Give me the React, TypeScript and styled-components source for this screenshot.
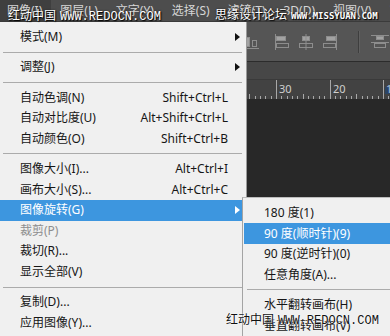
import React from "react";
import styled, { createGlobalStyle } from "styled-components";

const Global = createGlobalStyle`
  html, body { margin: 0; padding: 0; background: #282828; }
  * { box-sizing: border-box; }
`;

const UI_FONT = `"Noto Sans", "Noto Sans CJK SC", sans-serif`;

const Screen = styled.div`
  position: relative;
  width: 390px;
  height: 336px;
  overflow: hidden;
  display: flex;
  flex-direction: column;
  background: #282828;
  font-family: ${UI_FONT};
`;

const MenuBar = styled.div`
  height: 22px;
  flex: none;
  display: flex;
  align-items: stretch;
  background: #4d4d4d;
  border-bottom: 1px solid #3b3b3b;
`;

const MenuTitle = styled.div<{ $active?: boolean; $first?: boolean }>`
  display: flex;
  align-items: center;
  padding: 0 9px 0 ${(p) => (p.$first ? "7px" : "9px")};
  font-size: 12px;
  line-height: 1;
  white-space: nowrap;
  color: #d6d6d6;
  background: ${(p) => (p.$active ? "#3f3f3f" : "transparent")};
`;

const Toolbar = styled.div`
  height: 40px;
  flex: none;
  display: flex;
  align-items: center;
  padding-left: 243px;
  background: #555555;
  border-bottom: 1px solid #2c2c2c;
`;

const IconGroup = styled.div<{ $ml: number }>`
  display: flex;
  align-items: center;
  gap: 8px;
  margin-left: ${(p) => p.$ml}px;
  flex: none;
`;

const ToolSep = styled.div`
  width: 1px;
  height: 22px;
  margin-left: 20px;
  background: #3e3e3e;
  box-shadow: 1px 0 0 #606060;
  flex: none;
`;

const TabStrip = styled.div`
  height: 17px;
  flex: none;
  background: #474747;
`;

const RulerBar = styled.div`
  height: 20px;
  flex: none;
  background: #424242;
  border-top: 1px solid #3a3a3a;
`;

const Canvas = styled.div`
  flex: 1;
  background: #282828;
`;

const Menu = styled.div`
  position: absolute;
  left: 0;
  top: 22px;
  width: 247px;
  bottom: 0;
  padding-top: 5px;
  background: #f0f0f0;
  border-right: 1px solid #9a9a9a;
  display: flex;
  flex-direction: column;
`;

const SubMenu = styled.div`
  position: absolute;
  left: 242px;
  top: 197px;
  right: -10px;
  bottom: -10px;
  padding: 4.7px 0 0 1px;
  background: #f0f0f0;
  border-left: 1px solid #a4a4a4;
  border-top: 1px solid #bdbdbd;
  display: flex;
  flex-direction: column;
`;

const Item = styled.div<{ $active?: boolean; $disabled?: boolean; $indent: number }>`
  height: 20.6px;
  flex: none;
  display: flex;
  align-items: center;
  padding-left: ${(p) => p.$indent}px;
  padding-right: 18px;
  margin-right: ${(p) => (p.$indent > 19 ? "0" : "4px")};
  font-size: 12px;
  line-height: 1;
  white-space: nowrap;
  position: relative;
  color: ${(p) => (p.$active ? "#ffffff" : p.$disabled ? "#8e8e8e" : "#161616")};
  background: ${(p) => (p.$active ? "#3d96df" : "transparent")};
`;

const Label = styled.span`
  flex: 1;
`;

const Shortcut = styled.span`
  margin-right: 0;
`;

const Arrow = styled.svg`
  position: absolute;
  right: 6px;
  top: 50%;
  margin-top: -4px;
`;

const Separator = styled.div`
  height: 9.6px;
  flex: none;
  display: flex;
  align-items: center;
  padding: 0 4px 0 3px;
  &::after {
    content: "";
    flex: 1;
    height: 1px;
    background: #ababab;
  }
`;

const Watermark = styled.div<{ $x: number; $y: number; $dark?: boolean }>`
  position: absolute;
  left: ${(p) => p.$x}px;
  top: ${(p) => p.$y}px;
  display: flex;
  align-items: baseline;
  gap: 4px;
  white-space: nowrap;
  color: ${(p) => (p.$dark ? "#111" : "#ffffff")};
  text-shadow: ${(p) =>
    p.$dark
      ? "0 0 2px #fff, 0 0 1px #fff"
      : "1px 1px 1px #000, 0 0 2px #222"};
  pointer-events: none;
`;

const WmCjk = styled.span`
  font-family: "Noto Sans CJK SC", sans-serif;
  font-size: 12px;
  line-height: 14px;
`;

const WmLatin = styled.span<{ $small?: boolean }>`
  font-family: ${(p) => (p.$small ? `"DejaVu Sans Mono", monospace` : `"Liberation Mono", monospace`)};
  font-size: ${(p) => (p.$small ? "9px" : "12px")};
  font-weight: ${(p) => (p.$small ? 700 : 400)};
  line-height: 14px;
`;

type Entry =
  | { sep: true }
  | { label: string; shortcut?: string; arrow?: boolean; active?: boolean; disabled?: boolean };

const mainItems: Entry[] = [
  { label: "模式(M)", arrow: true },
  { sep: true },
  { label: "调整(J)", arrow: true },
  { sep: true },
  { label: "自动色调(N)", shortcut: "Shift+Ctrl+L" },
  { label: "自动对比度(U)", shortcut: "Alt+Shift+Ctrl+L" },
  { label: "自动颜色(O)", shortcut: "Shift+Ctrl+B" },
  { sep: true },
  { label: "图像大小(I)...", shortcut: "Alt+Ctrl+I" },
  { label: "画布大小(S)...", shortcut: "Alt+Ctrl+C" },
  { label: "图像旋转(G)", arrow: true, active: true },
  { label: "裁剪(P)", disabled: true },
  { label: "裁切(R)..." },
  { label: "显示全部(V)" },
  { sep: true },
  { label: "复制(D)..." },
  { label: "应用图像(Y)..." },
];

const subItems: Entry[] = [
  { label: "180 度(1)" },
  { label: "90 度(顺时针)(9)", active: true },
  { label: "90 度(逆时针)(0)" },
  { label: "任意角度(A)..." },
  { sep: true },
  { label: "水平翻转画布(H)" },
  { label: "垂直翻转画布(V)" },
];

const renderEntries = (entries: Entry[], indent: number) =>
  entries.map((e, i) =>
    "sep" in e ? (
      <Separator key={i} />
    ) : (
      <Item key={i} $active={e.active} $disabled={e.disabled} $indent={indent}>
        <Label>{e.label}</Label>
        {e.shortcut && <Shortcut>{e.shortcut}</Shortcut>}
        {e.arrow && (
          <Arrow width="5" height="8" viewBox="0 0 5 8">
            <polygon points="0,0 5,4 0,8" fill={e.active ? "#ffffff" : "#111111"} />
          </Arrow>
        )}
      </Item>
    )
  );

const S = "#8d8d8d";
const F = "#a2a2a2";

const AlignBottom = () => (
  <svg width="16" height="16" viewBox="0 0 16 16">
    <rect x="2.5" y="3.5" width="4" height="9" fill={F} stroke={S} />
    <rect x="9.5" y="6.5" width="4" height="6" fill="none" stroke={S} />
    <line x1="0" y1="14.5" x2="16" y2="14.5" stroke={S} />
  </svg>
);
const AlignLeft = () => (
  <svg width="16" height="16" viewBox="0 0 16 16">
    <line x1="1.5" y1="0" x2="1.5" y2="16" stroke={S} />
    <rect x="2.5" y="2.5" width="9" height="4" fill={F} stroke={S} />
    <rect x="2.5" y="9.5" width="12" height="4" fill="none" stroke={S} />
  </svg>
);
const AlignHCenter = () => (
  <svg width="16" height="16" viewBox="0 0 16 16">
    <rect x="4.5" y="2.5" width="7" height="4" fill={F} stroke={S} />
    <rect x="1.5" y="9.5" width="13" height="4" fill="none" stroke={S} />
    <line x1="8" y1="0" x2="8" y2="16" stroke={S} />
  </svg>
);
const AlignRight = () => (
  <svg width="16" height="16" viewBox="0 0 16 16">
    <line x1="14.5" y1="0" x2="14.5" y2="16" stroke={S} />
    <rect x="4.5" y="2.5" width="9" height="4" fill={F} stroke={S} />
    <rect x="1.5" y="9.5" width="12" height="4" fill="none" stroke={S} />
  </svg>
);
const DistTop = () => (
  <svg width="18" height="16" viewBox="0 0 18 16">
    <line x1="0" y1="1.5" x2="18" y2="1.5" stroke={S} />
    <rect x="5.5" y="2.5" width="7" height="3" fill={F} stroke={S} />
    <line x1="0" y1="8.5" x2="18" y2="8.5" stroke={S} />
    <rect x="3.5" y="9.5" width="11" height="4" fill="none" stroke={S} />
  </svg>
);

const Ruler = () => {
  const unit = 5.35;
  const origin = 383;
  const ticks: React.ReactNode[] = [];
  for (let k = -50; k <= 2; k++) {
    const x = Math.round(origin + k * unit) + 0.5;
    const major = k % 10 === 0;
    const mid = !major && k % 5 === 0;
    const h = major ? 19 : mid ? 5 : 3;
    ticks.push(<line key={k} x1={x} y1={19 - h} x2={x} y2={19} stroke="#a8a8a8" strokeWidth="1" />);
  }
  const labels = [
    { t: "30", x: 279 },
    { t: "20", x: 333 },
  ];
  return (
    <svg width="390" height="19" viewBox="0 0 390 19" style={{ display: "block" }}>
      {ticks}
      {labels.map((l) => (
        <text key={l.t} x={l.x} y={13} fontSize="11" fill="#cfcfcf" fontFamily="Noto Sans, sans-serif">
          {l.t}
        </text>
      ))}
      <rect x="385" y="7" width="5" height="7" fill="#2d4563" />
      <text x={386} y={13} fontSize="11" fill="#9dc0e8" fontFamily="Noto Sans, sans-serif">1</text>
    </svg>
  );
};

const titles = ["图像(I)", "图层(L)", "文字(Y)", "选择(S)", "滤镜(T)", "3D(D)", "视图(V)", "窗口(W)"];

export default function App() {
  return (
    <>
      <Global />
      <Screen>
        <MenuBar>
          {titles.map((t, i) => (
            <MenuTitle key={t} $active={i === 0} $first={i === 0}>
              {t}
            </MenuTitle>
          ))}
        </MenuBar>
        <Toolbar>
          <IconGroup $ml={0}>
            <AlignBottom />
          </IconGroup>
          <IconGroup $ml={15}>
            <AlignLeft />
            <AlignHCenter />
            <AlignRight />
          </IconGroup>
          <ToolSep />
          <IconGroup $ml={12}>
            <DistTop />
            <DistTop />
          </IconGroup>
        </Toolbar>
        <TabStrip />
        <RulerBar>
          <Ruler />
        </RulerBar>
        <Canvas />

        <Menu>{renderEntries(mainItems, 20)}</Menu>
        <SubMenu>{renderEntries(subItems, 20)}</SubMenu>

        <Watermark $x={8} $y={8}>
          <WmCjk>红动中国</WmCjk>
          <WmLatin>WWW.REDOCN.COM</WmLatin>
        </Watermark>
        <Watermark $x={215} $y={7}>
          <WmCjk>思缘设计论坛</WmCjk>
          <WmLatin $small>WWW.MISSYUAN.COM</WmLatin>
        </Watermark>
        <Watermark $x={226} $y={312} $dark>
          <WmCjk>红动中国</WmCjk>
          <WmLatin>WWW.REDOCN.COM</WmLatin>
        </Watermark>
      </Screen>
    </>
  );
}
